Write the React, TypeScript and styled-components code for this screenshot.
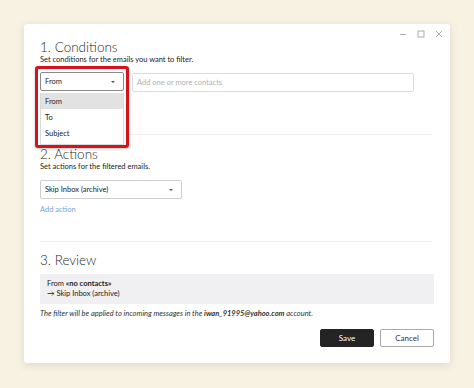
import React from 'react';
import styled, { createGlobalStyle } from 'styled-components';

const GlobalStyle = createGlobalStyle`
  html, body {
    margin: 0;
    padding: 0;
    background: #f8f2e3;
    font-family: Lato, 'Open Sans', sans-serif;
    color: #1f1f1f;
  }
`;

const Page = styled.div`
  width: 474px;
  height: 388px;
  padding: 24px 0 0 24px;
  box-sizing: border-box;
  overflow: hidden;
`;

const Dialog = styled.div`
  position: relative;
  width: 426px;
  height: 339px;
  box-sizing: border-box;
  background: #fff;
  border-radius: 3px;
  box-shadow: 0 2px 8px rgba(120, 100, 60, 0.18);
  padding: 0 16px;
  display: flex;
  flex-direction: column;
`;

const TitleBar = styled.div`
  height: 15px;
  display: flex;
  justify-content: flex-end;
  align-items: flex-end;
  gap: 8px;
  margin-right: -10px;
`;

const WinButton = styled.div`
  width: 10px;
  height: 10px;
  display: flex;
  align-items: center;
  justify-content: center;
`;

const SectionTitle = styled.div`
  font-size: 13.5px;
  font-weight: 300;
  line-height: 16px;
  color: #2a2a2a;
`;

const Hint = styled.div`
  font-size: 7.5px;
  line-height: 9px;
  color: #222;
`;

const Row = styled.div`
  display: flex;
  gap: 7px;
  margin-top: 9px;
`;

const Select = styled.div<{ $w: number; $dark?: boolean }>`
  width: ${p => p.$w}px;
  height: 19px;
  box-sizing: border-box;
  border: 1px solid ${p => (p.$dark ? '#8a8a8a' : '#cfcfcf')};
  border-radius: 2px;
  display: flex;
  align-items: center;
  justify-content: space-between;
  padding: 0 8px 0 4px;
  font-size: 7.5px;
  color: #222;
`;

const Caret = styled.span`
  width: 0;
  height: 0;
  border-left: 2.5px solid transparent;
  border-right: 2.5px solid transparent;
  border-top: 2.5px solid #555;
`;

const Input = styled.div`
  flex: 0 0 282px;
  height: 19px;
  box-sizing: border-box;
  border: 1px solid #dcdcdc;
  border-radius: 2px;
  display: flex;
  align-items: center;
  padding: 0 4px;
  font-size: 7.5px;
  color: #b0b0b0;
`;

const Divider = styled.div<{ $top: number }>`
  height: 1px;
  background: #ececec;
  margin-top: ${p => p.$top}px;
  margin-right: 2px;
`;

const Section = styled.div<{ $top: number }>`
  margin-top: ${p => p.$top}px;
`;

const LinkText = styled.div`
  margin-top: 6px;
  font-size: 7.5px;
  line-height: 9px;
  color: #7f9fcf;
`;

const ReviewBox = styled.div`
  margin-top: 6px;
  background: #f0eff1;
  height: 30px;
  box-sizing: border-box;
  padding: 5px 7px;
  font-size: 7.5px;
  line-height: 10px;
  color: #222;
  border-radius: 1px;
`;

const Note = styled.div`
  margin-top: 5px;
  font-size: 7.5px;
  line-height: 10px;
  font-style: italic;
  color: #333;
`;

const Footer = styled.div`
  margin-top: 10px;
  display: flex;
  justify-content: flex-end;
  gap: 6px;
`;

const Button = styled.div<{ $primary?: boolean }>`
  width: 54px;
  height: 18px;
  box-sizing: border-box;
  border-radius: 2px;
  display: flex;
  align-items: center;
  justify-content: center;
  font-size: 8px;
  background: ${p => (p.$primary ? '#242424' : '#fff')};
  color: ${p => (p.$primary ? '#fff' : '#333')};
  border: 1px solid ${p => (p.$primary ? '#242424' : '#a8a8a8')};
`;

const Highlight = styled.div`
  position: absolute;
  left: 11px;
  top: 42px;
  width: 94px;
  height: 82px;
  box-sizing: border-box;
  border: 3px solid #d3141d;
  border-radius: 3px;
  box-shadow: 0 1px 3px rgba(0, 0, 0, 0.25);
  background: #fff;
  padding: 3px 2px;
`;

const MenuSelect = styled(Select)`
  margin: 0;
`;

const Menu = styled.div`
  margin-top: 2px;
  width: 84px;
  border: 1px solid #d9d9d9;
  border-top: none;
  box-sizing: border-box;
  padding-bottom: 3px;
`;

const MenuItem = styled.div<{ $active?: boolean }>`
  height: 16px;
  display: flex;
  align-items: center;
  padding: 0 4px;
  font-size: 7.5px;
  color: #222;
  background: ${p => (p.$active ? '#e2e2e2' : 'transparent')};
`;

const App: React.FC = () => {
  return (
    <Page>
      <GlobalStyle />
      <Dialog>
        <TitleBar>
          <WinButton>
            <svg width="8" height="8" viewBox="0 0 8 8">
              <path d="M1 4.5h6" stroke="#9a9a9a" strokeWidth="0.8" />
            </svg>
          </WinButton>
          <WinButton>
            <svg width="8" height="8" viewBox="0 0 8 8">
              <rect x="1" y="1" width="6" height="6" fill="none" stroke="#9a9a9a" strokeWidth="0.8" />
            </svg>
          </WinButton>
          <WinButton>
            <svg width="8" height="8" viewBox="0 0 8 8">
              <path d="M1 1l6 6M7 1l-6 6" stroke="#9a9a9a" strokeWidth="0.8" />
            </svg>
          </WinButton>
        </TitleBar>

        <Section $top={0}>
          <SectionTitle>1. Conditions</SectionTitle>
          <Hint>Set conditions for the emails you want to filter.</Hint>
          <Row>
            <Select $w={85} $dark>
              From <Caret />
            </Select>
            <Input>Add one or more contacts</Input>
          </Row>
        </Section>
        <Divider $top={42} />

        <Section $top={11}>
          <SectionTitle>2. Actions</SectionTitle>
          <Hint>Set actions for the filtered emails.</Hint>
          <Row>
            <Select $w={142}>
              Skip Inbox (archive) <Caret />
            </Select>
          </Row>
          <LinkText>Add action</LinkText>
        </Section>
        <Divider $top={27} />

        <Section $top={10}>
          <SectionTitle>3. Review</SectionTitle>
          <ReviewBox>
            From <b>«no contacts»</b>
            <br />→ Skip Inbox (archive)
          </ReviewBox>
          <Note>
            The filter will be applied to incoming messages in the <b>iwan_91995@yahoo.com</b> account.
          </Note>
          <Footer>
            <Button $primary>Save</Button>
            <Button>Cancel</Button>
          </Footer>
        </Section>

        <Highlight>
          <MenuSelect $w={84} $dark>
            From <Caret />
          </MenuSelect>
          <Menu>
            <MenuItem $active>From</MenuItem>
            <MenuItem>To</MenuItem>
            <MenuItem>Subject</MenuItem>
          </Menu>
        </Highlight>
      </Dialog>
    </Page>
  );
};

export default App;
